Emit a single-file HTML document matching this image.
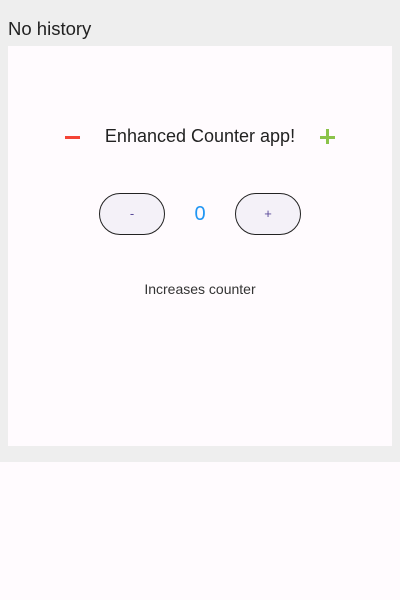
<!DOCTYPE html>
<html><head><style>
body{margin:0;width:400px;height:600px;background:#fffbfe;font-family:"Liberation Sans",sans-serif;position:relative;overflow:hidden}
.top{position:absolute;left:0;top:0;width:400px;height:462px;background:#eeeeee}
.h{position:absolute;left:8px;top:18px;font-size:18.5px;color:#222}
.card{position:absolute;left:8px;top:46px;width:384px;height:400px;background:#fffbfe}
.t{position:absolute;left:0;width:400px;text-align:center}
.btn{position:absolute;top:193px;width:64px;height:40px;border:1px solid #222;border-radius:21px;background:#f4f1f8;color:#5a4a9a;font-size:13px;text-align:center;line-height:40px}
</style></head><body>
<div class="top"></div>
<div class="h">No history</div>
<div class="card"></div>
<div style="position:absolute;left:65px;top:136px;width:15px;height:2.5px;background:#f44336"></div>
<div style="position:absolute;left:320px;top:136px;width:15px;height:2.5px;background:#8bc34a"></div>
<div style="position:absolute;left:326.3px;top:129px;width:2.5px;height:15px;background:#8bc34a"></div>
<div class="t" style="top:126px;font-size:18px;color:#222">Enhanced Counter app!</div>
<div class="btn" style="left:99px">-</div>
<div class="btn" style="left:235px">+</div>
<div class="t" style="top:203px;font-size:20px;color:#2196f3">0</div>
<div class="t" style="top:281px;font-size:14px;color:#333">Increases counter</div>
</body></html>
